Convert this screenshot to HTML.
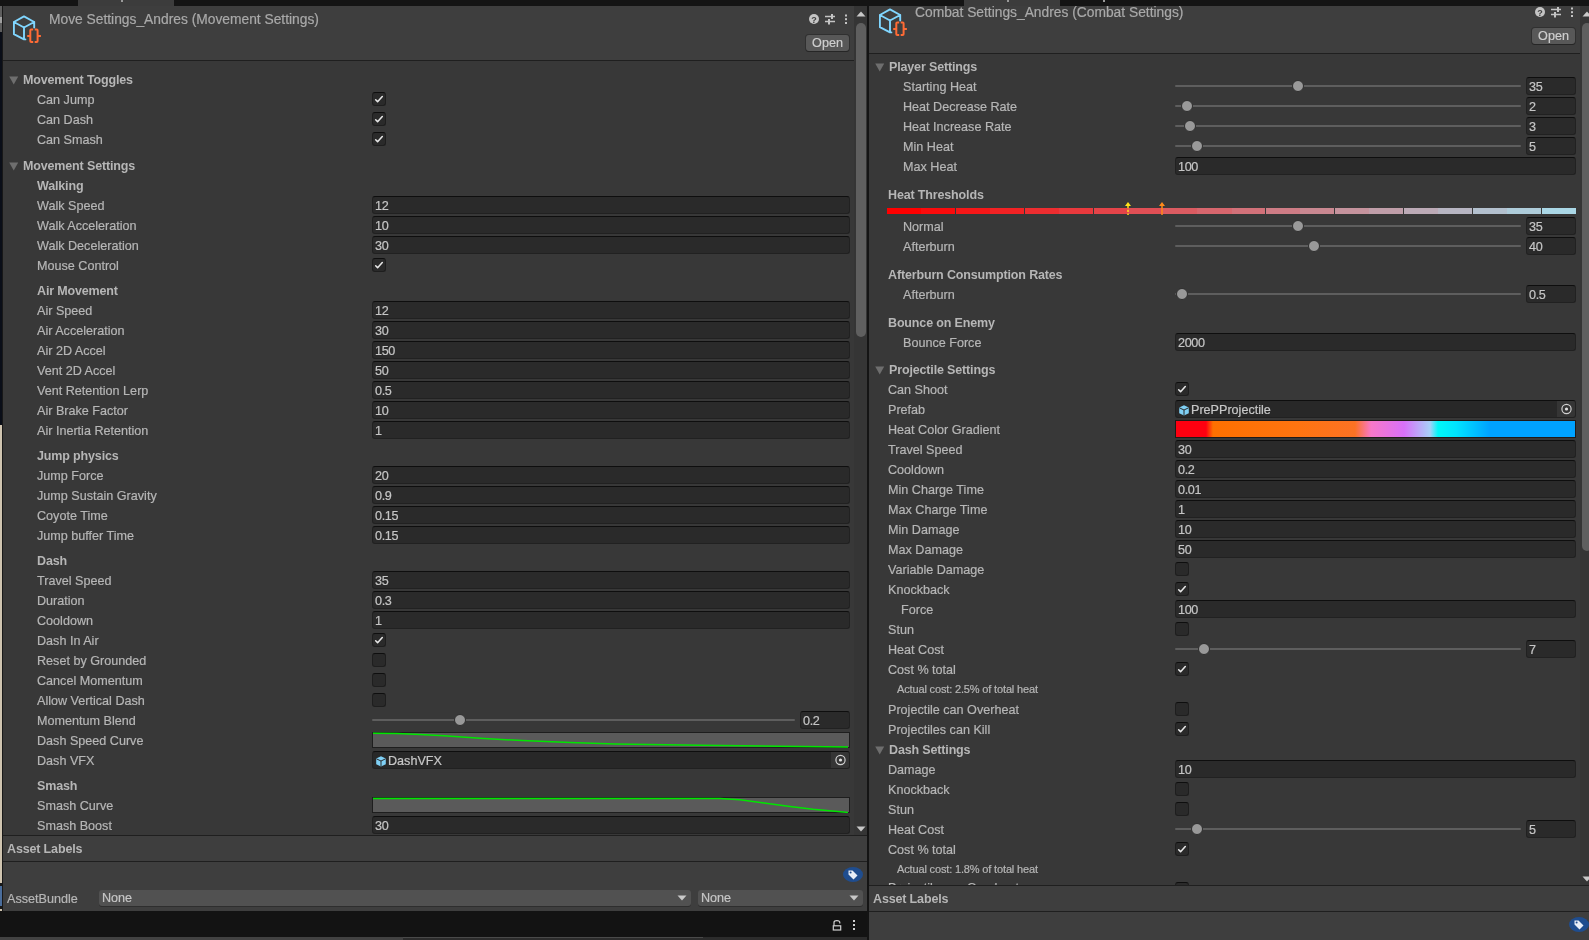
<!DOCTYPE html>
<html><head><meta charset="utf-8"><style>
html,body{margin:0;padding:0;}
body{width:1589px;height:940px;overflow:hidden;position:relative;background:#383838;font-family:"Liberation Sans", sans-serif;}
#root{position:absolute;left:0;top:0;width:1589px;height:940px;will-change:transform;}
#root>div,#root>svg{position:absolute;}
.ab{position:absolute;}
.t{position:absolute;height:20px;line-height:20px;white-space:nowrap;-webkit-text-stroke:0.2px currentColor;}
.cb{position:absolute;width:12px;height:12px;background:#2a2a2a;border:1px solid #1e1e1e;border-top-color:#0e0e0e;border-radius:3px;}
.fld{position:absolute;height:16px;background:#2a2a2a;border:1px solid #212121;border-top-color:#0e0e0e;border-radius:3px;box-sizing:content-box;}
.thumb{position:absolute;width:10px;height:10px;background:#999;border-radius:50%;border:1px solid #2e2e2e;}
</style></head><body><div id="root">
<div style="left:0px;top:0px;width:1589px;height:6px;background:#141414;"></div>
<div style="left:78px;top:0px;width:96px;height:6px;background:#3c3c3c;"></div>
<div style="left:964px;top:0px;width:96px;height:6px;background:#3c3c3c;"></div>
<div style="left:121px;top:0px;width:2px;height:2px;background:#9a9a9a;"></div>
<div style="left:1007px;top:0px;width:2px;height:2px;background:#9a9a9a;"></div>
<div style="left:1103px;top:0px;width:2px;height:2px;background:#9a9a9a;"></div>
<div style="left:0px;top:6px;width:3px;height:934px;background:#181818;"></div>
<div style="left:0px;top:6px;width:1.6px;height:26px;background:#5e5e5e;"></div>
<div style="left:0px;top:17px;width:1.6px;height:6px;background:#a0a0a0;"></div>
<div style="left:0px;top:32px;width:1.6px;height:393px;background:#0a0e18;"></div>
<div style="left:0px;top:425px;width:1.6px;height:458px;background:#cfc4b0;"></div>
<div style="left:0px;top:886px;width:1.6px;height:20px;background:#4a6d9c;"></div>
<div style="left:0px;top:909px;width:1.6px;height:2px;background:#cfc4b0;"></div>
<div style="left:3px;top:6px;width:851px;height:54px;background:#3e3e3e;"></div>
<div style="left:3px;top:60px;width:851px;height:1px;background:#1f1f1f;"></div>
<div style="left:3px;top:61px;width:851px;height:774px;background:#383838;"></div>
<div style="left:854px;top:6px;width:13px;height:829px;background:#353535;"></div>
<div class="ab" style="left:856px;top:23px;width:10px;height:314px;background:#5f5f5f;border-radius:5px"></div>
<svg class="ab" style="left:855px;top:11px" width="12" height="6"><path d="M1.5 5.5 L6 0.5 L10.5 5.5 Z" fill="#c8c8c8"/></svg>
<svg class="ab" style="left:855px;top:826px" width="12" height="6"><path d="M1.5 0.5 L6 5.5 L10.5 0.5 Z" fill="#c8c8c8"/></svg>
<svg class="ab" style="left:13px;top:14.6px" width="32" height="32">
<path d="M11 1.4 L21.2 7 L21.2 12.6 M11 1.4 L0.9 7 L0.9 19.1 L11 24.4 L12.4 24.4 M0.9 7 L11 12.5 L21.2 7 M11 12.5 L11 24.4" fill="none" stroke="#80d6ff" stroke-width="1.9" stroke-linejoin="round" stroke-linecap="round"/>
<path d="M20.2 14.6 L18.2 14.6 Q17.3 14.6 17.3 15.6 L17.3 20.9 L14.2 20.9 M17.3 20.9 L17.3 26.1 Q17.3 27.1 18.2 27.1 L20.2 27.1" fill="none" stroke="#ff6b35" stroke-width="2"/>
<path d="M21.7 14.6 L23.7 14.6 Q24.6 14.6 24.6 15.6 L24.6 20.9 L27.9 20.9 M24.6 20.9 L24.6 26.1 Q24.6 27.1 23.7 27.1 L21.7 27.1" fill="none" stroke="#ff6b35" stroke-width="2"/>
</svg>
<div class="t" style="left:49px;top:9.5px;font-size:13.8px;color:#a9a9a9;">Move Settings_Andres (Movement Settings)</div>
<svg class="ab" style="left:809px;top:13px" width="40" height="14">
<circle cx="5" cy="6" r="5" fill="#c4c4c4"/>
<text x="5" y="9.6" font-family="Liberation Sans" font-weight="700" font-size="9" fill="#3e3e3e" text-anchor="middle">?</text>
<path d="M16 3.5 L26 3.5 M16 8.5 L26 8.5" stroke="#c4c4c4" stroke-width="1.4"/>
<rect x="22" y="1" width="2" height="5" fill="#c4c4c4"/>
<rect x="19" y="6" width="2" height="5.5" fill="#c4c4c4"/>
<rect x="36" y="1.5" width="2" height="2" fill="#c4c4c4"/>
<rect x="36" y="5.2" width="2" height="2" fill="#c4c4c4"/>
<rect x="36" y="9" width="2" height="2" fill="#c4c4c4"/>
</svg>
<div class="ab" style="left:806px;top:35px;width:43px;height:16px;background:#585858;border-radius:3px;box-shadow:0 1px 0 #262626, 0 0 0 1px #303030"></div>
<div class="t" style="left:806px;top:33px;width:43px;text-align:center;font-size:12.6px;color:#cfcfcf">Open</div>
<svg class="ab" style="left:8.7px;top:75.5px" width="10" height="9"><path d="M0.2 0.5 L9.2 0.5 L4.7 8.4 Z" fill="#6e6e6e"/></svg>
<div class="t" style="left:23px;top:69.5px;font-size:12.5px;font-weight:700;letter-spacing:-0.15px;-webkit-text-stroke:0;color:#b6b6b6;">Movement Toggles</div>
<div class="t" style="left:37px;top:89.5px;font-size:12.6px;color:#b6b6b6;">Can Jump</div>
<div class="cb" style="left:372px;top:92px"></div>
<svg class="ab" style="left:372px;top:92px" width="14" height="14"><path d="M3.7 7.8 L5.6 9.8 L10.3 4.6" fill="none" stroke="#e6e6e6" stroke-width="1.55" stroke-linecap="round" stroke-linejoin="round"/></svg>
<div class="t" style="left:37px;top:109.5px;font-size:12.6px;color:#b6b6b6;">Can Dash</div>
<div class="cb" style="left:372px;top:112px"></div>
<svg class="ab" style="left:372px;top:112px" width="14" height="14"><path d="M3.7 7.8 L5.6 9.8 L10.3 4.6" fill="none" stroke="#e6e6e6" stroke-width="1.55" stroke-linecap="round" stroke-linejoin="round"/></svg>
<div class="t" style="left:37px;top:129.5px;font-size:12.6px;color:#b6b6b6;">Can Smash</div>
<div class="cb" style="left:372px;top:132px"></div>
<svg class="ab" style="left:372px;top:132px" width="14" height="14"><path d="M3.7 7.8 L5.6 9.8 L10.3 4.6" fill="none" stroke="#e6e6e6" stroke-width="1.55" stroke-linecap="round" stroke-linejoin="round"/></svg>
<svg class="ab" style="left:8.7px;top:161.5px" width="10" height="9"><path d="M0.2 0.5 L9.2 0.5 L4.7 8.4 Z" fill="#6e6e6e"/></svg>
<div class="t" style="left:23px;top:155.5px;font-size:12.5px;font-weight:700;letter-spacing:-0.15px;-webkit-text-stroke:0;color:#b6b6b6;">Movement Settings</div>
<div class="t" style="left:37px;top:175.5px;font-size:12.5px;font-weight:700;letter-spacing:-0.15px;-webkit-text-stroke:0;color:#b6b6b6;">Walking</div>
<div class="t" style="left:37px;top:195.5px;font-size:12.6px;color:#b6b6b6;">Walk Speed</div>
<div class="fld" style="left:372px;top:196px;width:476px"></div>
<div class="t" style="left:375px;top:195.5px;font-size:12.6px;color:#c6c6c6;letter-spacing:-0.35px">12</div>
<div class="t" style="left:37px;top:215.5px;font-size:12.6px;color:#b6b6b6;">Walk Acceleration</div>
<div class="fld" style="left:372px;top:216px;width:476px"></div>
<div class="t" style="left:375px;top:215.5px;font-size:12.6px;color:#c6c6c6;letter-spacing:-0.35px">10</div>
<div class="t" style="left:37px;top:235.5px;font-size:12.6px;color:#b6b6b6;">Walk Deceleration</div>
<div class="fld" style="left:372px;top:236px;width:476px"></div>
<div class="t" style="left:375px;top:235.5px;font-size:12.6px;color:#c6c6c6;letter-spacing:-0.35px">30</div>
<div class="t" style="left:37px;top:255.5px;font-size:12.6px;color:#b6b6b6;">Mouse Control</div>
<div class="cb" style="left:372px;top:258px"></div>
<svg class="ab" style="left:372px;top:258px" width="14" height="14"><path d="M3.7 7.8 L5.6 9.8 L10.3 4.6" fill="none" stroke="#e6e6e6" stroke-width="1.55" stroke-linecap="round" stroke-linejoin="round"/></svg>
<div class="t" style="left:37px;top:280.5px;font-size:12.5px;font-weight:700;letter-spacing:-0.15px;-webkit-text-stroke:0;color:#b6b6b6;">Air Movement</div>
<div class="t" style="left:37px;top:300.5px;font-size:12.6px;color:#b6b6b6;">Air Speed</div>
<div class="fld" style="left:372px;top:301px;width:476px"></div>
<div class="t" style="left:375px;top:300.5px;font-size:12.6px;color:#c6c6c6;letter-spacing:-0.35px">12</div>
<div class="t" style="left:37px;top:320.5px;font-size:12.6px;color:#b6b6b6;">Air Acceleration</div>
<div class="fld" style="left:372px;top:321px;width:476px"></div>
<div class="t" style="left:375px;top:320.5px;font-size:12.6px;color:#c6c6c6;letter-spacing:-0.35px">30</div>
<div class="t" style="left:37px;top:340.5px;font-size:12.6px;color:#b6b6b6;">Air 2D Accel</div>
<div class="fld" style="left:372px;top:341px;width:476px"></div>
<div class="t" style="left:375px;top:340.5px;font-size:12.6px;color:#c6c6c6;letter-spacing:-0.35px">150</div>
<div class="t" style="left:37px;top:360.5px;font-size:12.6px;color:#b6b6b6;">Vent 2D Accel</div>
<div class="fld" style="left:372px;top:361px;width:476px"></div>
<div class="t" style="left:375px;top:360.5px;font-size:12.6px;color:#c6c6c6;letter-spacing:-0.35px">50</div>
<div class="t" style="left:37px;top:380.5px;font-size:12.6px;color:#b6b6b6;">Vent Retention Lerp</div>
<div class="fld" style="left:372px;top:381px;width:476px"></div>
<div class="t" style="left:375px;top:380.5px;font-size:12.6px;color:#c6c6c6;letter-spacing:-0.35px">0.5</div>
<div class="t" style="left:37px;top:400.5px;font-size:12.6px;color:#b6b6b6;">Air Brake Factor</div>
<div class="fld" style="left:372px;top:401px;width:476px"></div>
<div class="t" style="left:375px;top:400.5px;font-size:12.6px;color:#c6c6c6;letter-spacing:-0.35px">10</div>
<div class="t" style="left:37px;top:420.5px;font-size:12.6px;color:#b6b6b6;">Air Inertia Retention</div>
<div class="fld" style="left:372px;top:421px;width:476px"></div>
<div class="t" style="left:375px;top:420.5px;font-size:12.6px;color:#c6c6c6;letter-spacing:-0.35px">1</div>
<div class="t" style="left:37px;top:445.5px;font-size:12.5px;font-weight:700;letter-spacing:-0.15px;-webkit-text-stroke:0;color:#b6b6b6;">Jump physics</div>
<div class="t" style="left:37px;top:465.5px;font-size:12.6px;color:#b6b6b6;">Jump Force</div>
<div class="fld" style="left:372px;top:466px;width:476px"></div>
<div class="t" style="left:375px;top:465.5px;font-size:12.6px;color:#c6c6c6;letter-spacing:-0.35px">20</div>
<div class="t" style="left:37px;top:485.5px;font-size:12.6px;color:#b6b6b6;">Jump Sustain Gravity</div>
<div class="fld" style="left:372px;top:486px;width:476px"></div>
<div class="t" style="left:375px;top:485.5px;font-size:12.6px;color:#c6c6c6;letter-spacing:-0.35px">0.9</div>
<div class="t" style="left:37px;top:505.5px;font-size:12.6px;color:#b6b6b6;">Coyote Time</div>
<div class="fld" style="left:372px;top:506px;width:476px"></div>
<div class="t" style="left:375px;top:505.5px;font-size:12.6px;color:#c6c6c6;letter-spacing:-0.35px">0.15</div>
<div class="t" style="left:37px;top:525.5px;font-size:12.6px;color:#b6b6b6;">Jump buffer Time</div>
<div class="fld" style="left:372px;top:526px;width:476px"></div>
<div class="t" style="left:375px;top:525.5px;font-size:12.6px;color:#c6c6c6;letter-spacing:-0.35px">0.15</div>
<div class="t" style="left:37px;top:550.5px;font-size:12.5px;font-weight:700;letter-spacing:-0.15px;-webkit-text-stroke:0;color:#b6b6b6;">Dash</div>
<div class="t" style="left:37px;top:570.5px;font-size:12.6px;color:#b6b6b6;">Travel Speed</div>
<div class="fld" style="left:372px;top:571px;width:476px"></div>
<div class="t" style="left:375px;top:570.5px;font-size:12.6px;color:#c6c6c6;letter-spacing:-0.35px">35</div>
<div class="t" style="left:37px;top:590.5px;font-size:12.6px;color:#b6b6b6;">Duration</div>
<div class="fld" style="left:372px;top:591px;width:476px"></div>
<div class="t" style="left:375px;top:590.5px;font-size:12.6px;color:#c6c6c6;letter-spacing:-0.35px">0.3</div>
<div class="t" style="left:37px;top:610.5px;font-size:12.6px;color:#b6b6b6;">Cooldown</div>
<div class="fld" style="left:372px;top:611px;width:476px"></div>
<div class="t" style="left:375px;top:610.5px;font-size:12.6px;color:#c6c6c6;letter-spacing:-0.35px">1</div>
<div class="t" style="left:37px;top:630.5px;font-size:12.6px;color:#b6b6b6;">Dash In Air</div>
<div class="cb" style="left:372px;top:633px"></div>
<svg class="ab" style="left:372px;top:633px" width="14" height="14"><path d="M3.7 7.8 L5.6 9.8 L10.3 4.6" fill="none" stroke="#e6e6e6" stroke-width="1.55" stroke-linecap="round" stroke-linejoin="round"/></svg>
<div class="t" style="left:37px;top:650.5px;font-size:12.6px;color:#b6b6b6;">Reset by Grounded</div>
<div class="cb" style="left:372px;top:653px"></div>
<div class="t" style="left:37px;top:670.5px;font-size:12.6px;color:#b6b6b6;">Cancel Momentum</div>
<div class="cb" style="left:372px;top:673px"></div>
<div class="t" style="left:37px;top:690.5px;font-size:12.6px;color:#b6b6b6;">Allow Vertical Dash</div>
<div class="cb" style="left:372px;top:693px"></div>
<div class="t" style="left:37px;top:710.5px;font-size:12.6px;color:#b6b6b6;">Momentum Blend</div>
<div style="left:372px;top:719px;width:423px;height:2px;background:#5e5e5e;border-radius:1px"></div>
<div class="thumb" style="left:454px;top:714px"></div>
<div class="fld" style="left:800px;top:711px;width:48px"></div>
<div class="t" style="left:803px;top:710.5px;font-size:12.6px;color:#c6c6c6;letter-spacing:-0.35px">0.2</div>
<div class="t" style="left:37px;top:730.5px;font-size:12.6px;color:#b6b6b6;">Dash Speed Curve</div>
<div class="ab" style="left:372px;top:732px;width:478px;height:16px;background:#1e1e1e"></div>
<div class="ab" style="left:373px;top:733px;width:476px;height:14px;background:#5a5a5a"></div>
<svg class="ab" style="left:372px;top:732px" width="478" height="16"><path d="M1.0 1.3 L25.0 1.5 L48.0 2.4 L72.0 3.8 L108.0 6.2 L150.0 8.6 L198.0 10.5 L243.0 11.9 L328.0 13.3 L408.0 14.3 L476.0 15.0" fill="none" stroke="#00e600" stroke-width="1.5"/></svg>
<div class="t" style="left:37px;top:750.5px;font-size:12.6px;color:#b6b6b6;">Dash VFX</div>
<div class="fld" style="left:372px;top:751px;width:476px;background:#282828"></div>
<div style="left:831px;top:752px;width:18px;height:16px;background:#353535;border-radius:0 2px 2px 0"></div>
<svg class="ab" style="left:831px;top:751px" width="19" height="18"><circle cx="9.5" cy="9" r="4.6" fill="none" stroke="#d0d0d0" stroke-width="1.2"/><circle cx="9.5" cy="9" r="1.6" fill="#e0e0e0"/></svg>
<svg class="ab" style="left:375.6px;top:755.6px" width="11" height="11"><path d="M5 0.3 L9.8 2.6 L9.8 8.2 L5 10.5 L0.2 8.2 L0.2 2.6 Z" fill="#7fd0f5"/><path d="M0.4 2.8 L5 5 L9.6 2.8 M5 5 L5 10.4" fill="none" stroke="#2a2a2a" stroke-width="1"/></svg>
<div class="t" style="left:388px;top:750.5px;font-size:12.6px;color:#c8c8c8;">DashVFX</div>
<div class="t" style="left:37px;top:775.5px;font-size:12.5px;font-weight:700;letter-spacing:-0.15px;-webkit-text-stroke:0;color:#b6b6b6;">Smash</div>
<div class="t" style="left:37px;top:795.5px;font-size:12.6px;color:#b6b6b6;">Smash Curve</div>
<div class="ab" style="left:372px;top:797px;width:478px;height:16px;background:#1e1e1e"></div>
<div class="ab" style="left:373px;top:798px;width:476px;height:14px;background:#5a5a5a"></div>
<svg class="ab" style="left:372px;top:797px" width="478" height="16"><path d="M1.0 1.6 L348.0 1.6 L368.0 2.8 L392.0 6.0 L418.0 9.4 L441.0 12.2 L463.0 14.3 L476.0 15.4" fill="none" stroke="#00e600" stroke-width="1.5"/></svg>
<div class="t" style="left:37px;top:815.5px;font-size:12.6px;color:#b6b6b6;">Smash Boost</div>
<div class="fld" style="left:372px;top:816px;width:476px"></div>
<div class="t" style="left:375px;top:815.5px;font-size:12.6px;color:#c6c6c6;letter-spacing:-0.35px">30</div>
<div style="left:3px;top:835px;width:864px;height:1px;background:#1f1f1f;"></div>
<div style="left:3px;top:836px;width:864px;height:25px;background:#3e3e3e;"></div>
<div class="t" style="left:7px;top:838.5px;font-size:12.5px;font-weight:700;letter-spacing:-0.15px;-webkit-text-stroke:0;color:#b6b6b6;">Asset Labels</div>
<div style="left:3px;top:861px;width:864px;height:1px;background:#1f1f1f;"></div>
<div style="left:3px;top:862px;width:864px;height:49px;background:#3e3e3e;"></div>
<svg class="ab" style="left:843px;top:867px" width="20" height="15"><ellipse cx="10" cy="7.5" rx="10" ry="7.5" fill="#1f4d8f"/><path d="M5.5 3.5 L9.5 3.5 L14.5 8.5 L10.5 12.5 L5.5 7.5 Z" fill="#e8eef8"/><circle cx="7.6" cy="5.6" r="1" fill="#1f4d8f"/></svg>
<div class="t" style="left:7px;top:888.5px;font-size:12.6px;color:#b6b6b6;">AssetBundle</div>
<div class="ab" style="left:99px;top:890px;width:592px;height:16px;background:#515151;border-radius:3px;box-shadow:0 1px 0 #2e2e2e"></div>
<div class="t" style="left:102px;top:887.5px;font-size:12.6px;color:#c6c6c6;">None</div>
<svg class="ab" style="left:677px;top:895px" width="10" height="6"><path d="M0.5 0.5 L9.5 0.5 L5 5.5 Z" fill="#c8c8c8"/></svg>
<div class="ab" style="left:698px;top:890px;width:165px;height:16px;background:#515151;border-radius:3px;box-shadow:0 1px 0 #2e2e2e"></div>
<div class="t" style="left:701px;top:887.5px;font-size:12.6px;color:#c6c6c6;">None</div>
<svg class="ab" style="left:849px;top:895px" width="10" height="6"><path d="M0.5 0.5 L9.5 0.5 L5 5.5 Z" fill="#c8c8c8"/></svg>
<div style="left:0px;top:911px;width:867px;height:26px;background:#131313;"></div>
<svg class="ab" style="left:831px;top:917px" width="28" height="14"><path d="M3 8.8 L3 5.6 Q3 3.6 5.9 3.6 Q8.8 3.6 8.8 5.6 L8.8 6.4" fill="none" stroke="#d0d0d0" stroke-width="1.2"/><rect x="2.3" y="8.8" width="7.4" height="4.2" fill="none" stroke="#d0d0d0" stroke-width="1.2"/><rect x="22" y="3" width="2" height="2" fill="#d0d0d0"/><rect x="22" y="7" width="2" height="2" fill="#d0d0d0"/><rect x="22" y="11" width="2" height="2" fill="#d0d0d0"/></svg>
<div style="left:0px;top:937px;width:403px;height:3px;background:#424242;"></div>
<div style="left:403px;top:937px;width:464px;height:3px;background:#2c2c2c;"></div>
<div style="left:403px;top:937px;width:300px;height:1px;background:#4a4a4a;"></div>
<div style="left:867px;top:0px;width:2px;height:940px;background:#141414;"></div>
<div style="left:867px;top:0px;width:2px;height:6px;background:#141414;"></div>
<div style="left:869px;top:6px;width:711px;height:47px;background:#3e3e3e;"></div>
<div style="left:869px;top:53px;width:711px;height:1px;background:#1f1f1f;"></div>
<div style="left:869px;top:54px;width:711px;height:831px;background:#383838;"></div>
<div style="left:1580px;top:6px;width:9px;height:879px;background:#353535;"></div>
<div class="ab" style="left:1582px;top:23px;width:10px;height:528px;background:#5f5f5f;border-radius:5px"></div>
<svg class="ab" style="left:1581px;top:11px" width="12" height="6"><path d="M1.5 5.5 L6 0.5 L10.5 5.5 Z" fill="#c8c8c8"/></svg>
<svg class="ab" style="left:1581px;top:876px" width="12" height="6"><path d="M1.5 0.5 L6 5.5 L10.5 0.5 Z" fill="#c8c8c8"/></svg>
<svg class="ab" style="left:879px;top:7.6px" width="32" height="32">
<path d="M11 1.4 L21.2 7 L21.2 12.6 M11 1.4 L0.9 7 L0.9 19.1 L11 24.4 L12.4 24.4 M0.9 7 L11 12.5 L21.2 7 M11 12.5 L11 24.4" fill="none" stroke="#80d6ff" stroke-width="1.9" stroke-linejoin="round" stroke-linecap="round"/>
<path d="M20.2 14.6 L18.2 14.6 Q17.3 14.6 17.3 15.6 L17.3 20.9 L14.2 20.9 M17.3 20.9 L17.3 26.1 Q17.3 27.1 18.2 27.1 L20.2 27.1" fill="none" stroke="#ff6b35" stroke-width="2"/>
<path d="M21.7 14.6 L23.7 14.6 Q24.6 14.6 24.6 15.6 L24.6 20.9 L27.9 20.9 M24.6 20.9 L24.6 26.1 Q24.6 27.1 23.7 27.1 L21.7 27.1" fill="none" stroke="#ff6b35" stroke-width="2"/>
</svg>
<div class="t" style="left:915px;top:2.5px;font-size:13.8px;color:#a9a9a9;">Combat Settings_Andres (Combat Settings)</div>
<svg class="ab" style="left:1535px;top:6px" width="40" height="14">
<circle cx="5" cy="6" r="5" fill="#c4c4c4"/>
<text x="5" y="9.6" font-family="Liberation Sans" font-weight="700" font-size="9" fill="#3e3e3e" text-anchor="middle">?</text>
<path d="M16 3.5 L26 3.5 M16 8.5 L26 8.5" stroke="#c4c4c4" stroke-width="1.4"/>
<rect x="22" y="1" width="2" height="5" fill="#c4c4c4"/>
<rect x="19" y="6" width="2" height="5.5" fill="#c4c4c4"/>
<rect x="36" y="1.5" width="2" height="2" fill="#c4c4c4"/>
<rect x="36" y="5.2" width="2" height="2" fill="#c4c4c4"/>
<rect x="36" y="9" width="2" height="2" fill="#c4c4c4"/>
</svg>
<div class="ab" style="left:1532px;top:28px;width:43px;height:16px;background:#585858;border-radius:3px;box-shadow:0 1px 0 #262626, 0 0 0 1px #303030"></div>
<div class="t" style="left:1532px;top:26px;width:43px;text-align:center;font-size:12.6px;color:#cfcfcf">Open</div>
<svg class="ab" style="left:875px;top:62.5px" width="10" height="9"><path d="M0.2 0.5 L9.2 0.5 L4.7 8.4 Z" fill="#6e6e6e"/></svg>
<div class="t" style="left:889px;top:56.5px;font-size:12.5px;font-weight:700;letter-spacing:-0.15px;-webkit-text-stroke:0;color:#b6b6b6;">Player Settings</div>
<div class="t" style="left:903px;top:76.5px;font-size:12.6px;color:#b6b6b6;">Starting Heat</div>
<div style="left:1175px;top:85px;width:346px;height:2px;background:#5e5e5e;border-radius:1px"></div>
<div class="thumb" style="left:1292px;top:80px"></div>
<div class="fld" style="left:1526px;top:77px;width:48px"></div>
<div class="t" style="left:1529px;top:76.5px;font-size:12.6px;color:#c6c6c6;letter-spacing:-0.35px">35</div>
<div class="t" style="left:903px;top:96.5px;font-size:12.6px;color:#b6b6b6;">Heat Decrease Rate</div>
<div style="left:1175px;top:105px;width:346px;height:2px;background:#5e5e5e;border-radius:1px"></div>
<div class="thumb" style="left:1181px;top:100px"></div>
<div class="fld" style="left:1526px;top:97px;width:48px"></div>
<div class="t" style="left:1529px;top:96.5px;font-size:12.6px;color:#c6c6c6;letter-spacing:-0.35px">2</div>
<div class="t" style="left:903px;top:116.5px;font-size:12.6px;color:#b6b6b6;">Heat Increase Rate</div>
<div style="left:1175px;top:125px;width:346px;height:2px;background:#5e5e5e;border-radius:1px"></div>
<div class="thumb" style="left:1184px;top:120px"></div>
<div class="fld" style="left:1526px;top:117px;width:48px"></div>
<div class="t" style="left:1529px;top:116.5px;font-size:12.6px;color:#c6c6c6;letter-spacing:-0.35px">3</div>
<div class="t" style="left:903px;top:136.5px;font-size:12.6px;color:#b6b6b6;">Min Heat</div>
<div style="left:1175px;top:145px;width:346px;height:2px;background:#5e5e5e;border-radius:1px"></div>
<div class="thumb" style="left:1191px;top:140px"></div>
<div class="fld" style="left:1526px;top:137px;width:48px"></div>
<div class="t" style="left:1529px;top:136.5px;font-size:12.6px;color:#c6c6c6;letter-spacing:-0.35px">5</div>
<div class="t" style="left:903px;top:156.5px;font-size:12.6px;color:#b6b6b6;">Max Heat</div>
<div class="fld" style="left:1175px;top:157px;width:399px"></div>
<div class="t" style="left:1178px;top:156.5px;font-size:12.6px;color:#c6c6c6;letter-spacing:-0.35px">100</div>
<div class="t" style="left:888px;top:184.5px;font-size:12.5px;font-weight:700;letter-spacing:-0.15px;-webkit-text-stroke:0;color:#b6b6b6;">Heat Thresholds</div>
<div class="ab" style="left:887.00px;top:208px;width:34.75px;height:6px;background:rgb(255, 0, 0)"></div>
<div class="ab" style="left:921.45px;top:208px;width:34.75px;height:6px;background:rgb(251, 11, 12)"></div>
<div class="ab" style="left:955.90px;top:208px;width:34.75px;height:6px;background:rgb(246, 23, 24)"></div>
<div class="ab" style="left:990.35px;top:208px;width:34.75px;height:6px;background:rgb(242, 34, 36)"></div>
<div class="ab" style="left:1024.80px;top:208px;width:34.75px;height:6px;background:rgb(237, 45, 48)"></div>
<div class="ab" style="left:1059.25px;top:208px;width:34.75px;height:6px;background:rgb(233, 57, 61)"></div>
<div class="ab" style="left:1093.70px;top:208px;width:34.75px;height:6px;background:rgb(228, 68, 73)"></div>
<div class="ab" style="left:1128.15px;top:208px;width:34.75px;height:6px;background:rgb(224, 79, 85)"></div>
<div class="ab" style="left:1162.60px;top:208px;width:34.75px;height:6px;background:rgb(219, 91, 97)"></div>
<div class="ab" style="left:1197.05px;top:208px;width:34.75px;height:6px;background:rgb(215, 102, 109)"></div>
<div class="ab" style="left:1231.50px;top:208px;width:34.75px;height:6px;background:rgb(210, 113, 121)"></div>
<div class="ab" style="left:1265.95px;top:208px;width:34.75px;height:6px;background:rgb(206, 124, 133)"></div>
<div class="ab" style="left:1300.40px;top:208px;width:34.75px;height:6px;background:rgb(201, 136, 145)"></div>
<div class="ab" style="left:1334.85px;top:208px;width:34.75px;height:6px;background:rgb(197, 147, 157)"></div>
<div class="ab" style="left:1369.30px;top:208px;width:34.75px;height:6px;background:rgb(192, 158, 169)"></div>
<div class="ab" style="left:1403.75px;top:208px;width:34.75px;height:6px;background:rgb(188, 170, 182)"></div>
<div class="ab" style="left:1438.20px;top:208px;width:34.75px;height:6px;background:rgb(183, 181, 194)"></div>
<div class="ab" style="left:1472.65px;top:208px;width:34.75px;height:6px;background:rgb(179, 192, 206)"></div>
<div class="ab" style="left:1507.10px;top:208px;width:34.75px;height:6px;background:rgb(174, 204, 218)"></div>
<div class="ab" style="left:1541.55px;top:208px;width:34.75px;height:6px;background:rgb(170, 215, 230)"></div>
<div style="left:955px;top:208px;width:1px;height:6px;background:#383838;"></div>
<div style="left:1024px;top:208px;width:1px;height:6px;background:#383838;"></div>
<div style="left:1093px;top:208px;width:1px;height:6px;background:#383838;"></div>
<div style="left:1265px;top:208px;width:1px;height:6px;background:#383838;"></div>
<div style="left:1334px;top:208px;width:1px;height:6px;background:#383838;"></div>
<div style="left:1403px;top:208px;width:1px;height:6px;background:#383838;"></div>
<div style="left:1472px;top:208px;width:1px;height:6px;background:#383838;"></div>
<div style="left:1541px;top:208px;width:1px;height:6px;background:#383838;"></div>
<svg class="ab" style="left:1123px;top:201px" width="10" height="15"><path d="M2 4.9 L5 0.9 L8 4.9 Z" fill="#ffe21a"/><path d="M5 5 L5 14" stroke="#ffe21a" stroke-width="1.5" stroke-dasharray="2.2 1.6"/></svg>
<svg class="ab" style="left:1157px;top:201px" width="10" height="15"><path d="M2 4.9 L5 0.9 L8 4.9 Z" fill="#ff8a1a"/><path d="M5 5 L5 14" stroke="#ff8a1a" stroke-width="1.5"/></svg>
<div class="t" style="left:903px;top:216.5px;font-size:12.6px;color:#b6b6b6;">Normal</div>
<div style="left:1175px;top:225px;width:346px;height:2px;background:#5e5e5e;border-radius:1px"></div>
<div class="thumb" style="left:1292px;top:220px"></div>
<div class="fld" style="left:1526px;top:217px;width:48px"></div>
<div class="t" style="left:1529px;top:216.5px;font-size:12.6px;color:#c6c6c6;letter-spacing:-0.35px">35</div>
<div class="t" style="left:903px;top:236.5px;font-size:12.6px;color:#b6b6b6;">Afterburn</div>
<div style="left:1175px;top:245px;width:346px;height:2px;background:#5e5e5e;border-radius:1px"></div>
<div class="thumb" style="left:1308px;top:240px"></div>
<div class="fld" style="left:1526px;top:237px;width:48px"></div>
<div class="t" style="left:1529px;top:236.5px;font-size:12.6px;color:#c6c6c6;letter-spacing:-0.35px">40</div>
<div class="t" style="left:888px;top:264.5px;font-size:12.5px;font-weight:700;letter-spacing:-0.15px;-webkit-text-stroke:0;color:#b6b6b6;">Afterburn Consumption Rates</div>
<div class="t" style="left:903px;top:284.5px;font-size:12.6px;color:#b6b6b6;">Afterburn</div>
<div style="left:1175px;top:293px;width:346px;height:2px;background:#5e5e5e;border-radius:1px"></div>
<div class="thumb" style="left:1176px;top:288px"></div>
<div class="fld" style="left:1526px;top:285px;width:48px"></div>
<div class="t" style="left:1529px;top:284.5px;font-size:12.6px;color:#c6c6c6;letter-spacing:-0.35px">0.5</div>
<div class="t" style="left:888px;top:312.5px;font-size:12.5px;font-weight:700;letter-spacing:-0.15px;-webkit-text-stroke:0;color:#b6b6b6;">Bounce on Enemy</div>
<div class="t" style="left:903px;top:332.5px;font-size:12.6px;color:#b6b6b6;">Bounce Force</div>
<div class="fld" style="left:1175px;top:333px;width:399px"></div>
<div class="t" style="left:1178px;top:332.5px;font-size:12.6px;color:#c6c6c6;letter-spacing:-0.35px">2000</div>
<svg class="ab" style="left:875px;top:365.5px" width="10" height="9"><path d="M0.2 0.5 L9.2 0.5 L4.7 8.4 Z" fill="#6e6e6e"/></svg>
<div class="t" style="left:889px;top:359.5px;font-size:12.5px;font-weight:700;letter-spacing:-0.15px;-webkit-text-stroke:0;color:#b6b6b6;">Projectile Settings</div>
<div class="t" style="left:888px;top:379.5px;font-size:12.6px;color:#b6b6b6;">Can Shoot</div>
<div class="cb" style="left:1175px;top:382px"></div>
<svg class="ab" style="left:1175px;top:382px" width="14" height="14"><path d="M3.7 7.8 L5.6 9.8 L10.3 4.6" fill="none" stroke="#e6e6e6" stroke-width="1.55" stroke-linecap="round" stroke-linejoin="round"/></svg>
<div class="t" style="left:888px;top:399.5px;font-size:12.6px;color:#b6b6b6;">Prefab</div>
<div class="fld" style="left:1175px;top:400px;width:399px;background:#282828"></div>
<div style="left:1557px;top:401px;width:18px;height:16px;background:#353535;border-radius:0 2px 2px 0"></div>
<svg class="ab" style="left:1557px;top:400px" width="19" height="18"><circle cx="9.5" cy="9" r="4.6" fill="none" stroke="#d0d0d0" stroke-width="1.2"/><circle cx="9.5" cy="9" r="1.6" fill="#e0e0e0"/></svg>
<svg class="ab" style="left:1178.6px;top:404.6px" width="11" height="11"><path d="M5 0.3 L9.8 2.6 L9.8 8.2 L5 10.5 L0.2 8.2 L0.2 2.6 Z" fill="#7fd0f5"/><path d="M0.4 2.8 L5 5 L9.6 2.8 M5 5 L5 10.4" fill="none" stroke="#2a2a2a" stroke-width="1"/></svg>
<div class="t" style="left:1191px;top:399.5px;font-size:12.6px;color:#c8c8c8;">PrePProjectile</div>
<div class="t" style="left:888px;top:419.5px;font-size:12.6px;color:#b6b6b6;">Heat Color Gradient</div>
<div class="ab" style="left:1175px;top:420px;width:401px;height:18px;background:#201a18"></div>
<div class="ab" style="left:1176px;top:421px;width:399px;height:16px;background:linear-gradient(to right,#ff0010 0px,#ff0010 30px,#ff7000 37px,#ff7410 120px,#fc7224 179px,#f878c8 195px,#d870f8 228px,#a8d0f8 254px,#00f8f8 262px,#00e4ff 280px,#00a2ff 314px,#00a2ff 399px)"></div>
<div class="t" style="left:888px;top:439.5px;font-size:12.6px;color:#b6b6b6;">Travel Speed</div>
<div class="fld" style="left:1175px;top:440px;width:399px"></div>
<div class="t" style="left:1178px;top:439.5px;font-size:12.6px;color:#c6c6c6;letter-spacing:-0.35px">30</div>
<div class="t" style="left:888px;top:459.5px;font-size:12.6px;color:#b6b6b6;">Cooldown</div>
<div class="fld" style="left:1175px;top:460px;width:399px"></div>
<div class="t" style="left:1178px;top:459.5px;font-size:12.6px;color:#c6c6c6;letter-spacing:-0.35px">0.2</div>
<div class="t" style="left:888px;top:479.5px;font-size:12.6px;color:#b6b6b6;">Min Charge Time</div>
<div class="fld" style="left:1175px;top:480px;width:399px"></div>
<div class="t" style="left:1178px;top:479.5px;font-size:12.6px;color:#c6c6c6;letter-spacing:-0.35px">0.01</div>
<div class="t" style="left:888px;top:499.5px;font-size:12.6px;color:#b6b6b6;">Max Charge Time</div>
<div class="fld" style="left:1175px;top:500px;width:399px"></div>
<div class="t" style="left:1178px;top:499.5px;font-size:12.6px;color:#c6c6c6;letter-spacing:-0.35px">1</div>
<div class="t" style="left:888px;top:519.5px;font-size:12.6px;color:#b6b6b6;">Min Damage</div>
<div class="fld" style="left:1175px;top:520px;width:399px"></div>
<div class="t" style="left:1178px;top:519.5px;font-size:12.6px;color:#c6c6c6;letter-spacing:-0.35px">10</div>
<div class="t" style="left:888px;top:539.5px;font-size:12.6px;color:#b6b6b6;">Max Damage</div>
<div class="fld" style="left:1175px;top:540px;width:399px"></div>
<div class="t" style="left:1178px;top:539.5px;font-size:12.6px;color:#c6c6c6;letter-spacing:-0.35px">50</div>
<div class="t" style="left:888px;top:559.5px;font-size:12.6px;color:#b6b6b6;">Variable Damage</div>
<div class="cb" style="left:1175px;top:562px"></div>
<div class="t" style="left:888px;top:579.5px;font-size:12.6px;color:#b6b6b6;">Knockback</div>
<div class="cb" style="left:1175px;top:582px"></div>
<svg class="ab" style="left:1175px;top:582px" width="14" height="14"><path d="M3.7 7.8 L5.6 9.8 L10.3 4.6" fill="none" stroke="#e6e6e6" stroke-width="1.55" stroke-linecap="round" stroke-linejoin="round"/></svg>
<div class="t" style="left:901px;top:599.5px;font-size:12.6px;color:#b6b6b6;">Force</div>
<div class="fld" style="left:1175px;top:600px;width:399px"></div>
<div class="t" style="left:1178px;top:599.5px;font-size:12.6px;color:#c6c6c6;letter-spacing:-0.35px">100</div>
<div class="t" style="left:888px;top:619.5px;font-size:12.6px;color:#b6b6b6;">Stun</div>
<div class="cb" style="left:1175px;top:622px"></div>
<div class="t" style="left:888px;top:639.5px;font-size:12.6px;color:#b6b6b6;">Heat Cost</div>
<div style="left:1175px;top:648px;width:346px;height:2px;background:#5e5e5e;border-radius:1px"></div>
<div class="thumb" style="left:1198px;top:643px"></div>
<div class="fld" style="left:1526px;top:640px;width:48px"></div>
<div class="t" style="left:1529px;top:639.5px;font-size:12.6px;color:#c6c6c6;letter-spacing:-0.35px">7</div>
<div class="t" style="left:888px;top:659.5px;font-size:12.6px;color:#b6b6b6;">Cost % total</div>
<div class="cb" style="left:1175px;top:662px"></div>
<svg class="ab" style="left:1175px;top:662px" width="14" height="14"><path d="M3.7 7.8 L5.6 9.8 L10.3 4.6" fill="none" stroke="#e6e6e6" stroke-width="1.55" stroke-linecap="round" stroke-linejoin="round"/></svg>
<div class="t" style="left:897px;top:678.5px;font-size:11px;color:#b6b6b6;letter-spacing:-0.15px">Actual cost: 2.5% of total heat</div>
<div class="t" style="left:888px;top:699.5px;font-size:12.6px;color:#b6b6b6;">Projectile can Overheat</div>
<div class="cb" style="left:1175px;top:702px"></div>
<div class="t" style="left:888px;top:719.5px;font-size:12.6px;color:#b6b6b6;">Projectiles can Kill</div>
<div class="cb" style="left:1175px;top:722px"></div>
<svg class="ab" style="left:1175px;top:722px" width="14" height="14"><path d="M3.7 7.8 L5.6 9.8 L10.3 4.6" fill="none" stroke="#e6e6e6" stroke-width="1.55" stroke-linecap="round" stroke-linejoin="round"/></svg>
<svg class="ab" style="left:875px;top:745.5px" width="10" height="9"><path d="M0.2 0.5 L9.2 0.5 L4.7 8.4 Z" fill="#6e6e6e"/></svg>
<div class="t" style="left:889px;top:739.5px;font-size:12.5px;font-weight:700;letter-spacing:-0.15px;-webkit-text-stroke:0;color:#b6b6b6;">Dash Settings</div>
<div class="t" style="left:888px;top:759.5px;font-size:12.6px;color:#b6b6b6;">Damage</div>
<div class="fld" style="left:1175px;top:760px;width:399px"></div>
<div class="t" style="left:1178px;top:759.5px;font-size:12.6px;color:#c6c6c6;letter-spacing:-0.35px">10</div>
<div class="t" style="left:888px;top:779.5px;font-size:12.6px;color:#b6b6b6;">Knockback</div>
<div class="cb" style="left:1175px;top:782px"></div>
<div class="t" style="left:888px;top:799.5px;font-size:12.6px;color:#b6b6b6;">Stun</div>
<div class="cb" style="left:1175px;top:802px"></div>
<div class="t" style="left:888px;top:819.5px;font-size:12.6px;color:#b6b6b6;">Heat Cost</div>
<div style="left:1175px;top:828px;width:346px;height:2px;background:#5e5e5e;border-radius:1px"></div>
<div class="thumb" style="left:1191px;top:823px"></div>
<div class="fld" style="left:1526px;top:820px;width:48px"></div>
<div class="t" style="left:1529px;top:819.5px;font-size:12.6px;color:#c6c6c6;letter-spacing:-0.35px">5</div>
<div class="t" style="left:888px;top:839.5px;font-size:12.6px;color:#b6b6b6;">Cost % total</div>
<div class="cb" style="left:1175px;top:842px"></div>
<svg class="ab" style="left:1175px;top:842px" width="14" height="14"><path d="M3.7 7.8 L5.6 9.8 L10.3 4.6" fill="none" stroke="#e6e6e6" stroke-width="1.55" stroke-linecap="round" stroke-linejoin="round"/></svg>
<div class="t" style="left:897px;top:858.5px;font-size:11px;color:#b6b6b6;letter-spacing:-0.15px">Actual cost: 1.8% of total heat</div>
<div class="t" style="left:888px;top:877.5px;font-size:12.6px;color:#b6b6b6;">Projectile can Overheat</div>
<div class="cb" style="left:1175px;top:882px"></div>
<div style="left:869px;top:885px;width:720px;height:1px;background:#1f1f1f;"></div>
<div style="left:869px;top:886px;width:720px;height:25px;background:#3e3e3e;"></div>
<div class="t" style="left:873px;top:888.5px;font-size:12.5px;font-weight:700;letter-spacing:-0.15px;-webkit-text-stroke:0;color:#b6b6b6;">Asset Labels</div>
<div style="left:869px;top:911px;width:720px;height:1px;background:#1f1f1f;"></div>
<div style="left:869px;top:912px;width:720px;height:28px;background:#3e3e3e;"></div>
<svg class="ab" style="left:1569px;top:917px" width="20" height="15"><ellipse cx="10" cy="7.5" rx="10" ry="7.5" fill="#1f4d8f"/><path d="M5.5 3.5 L9.5 3.5 L14.5 8.5 L10.5 12.5 L5.5 7.5 Z" fill="#e8eef8"/><circle cx="7.6" cy="5.6" r="1" fill="#1f4d8f"/></svg>
</div></body></html>
